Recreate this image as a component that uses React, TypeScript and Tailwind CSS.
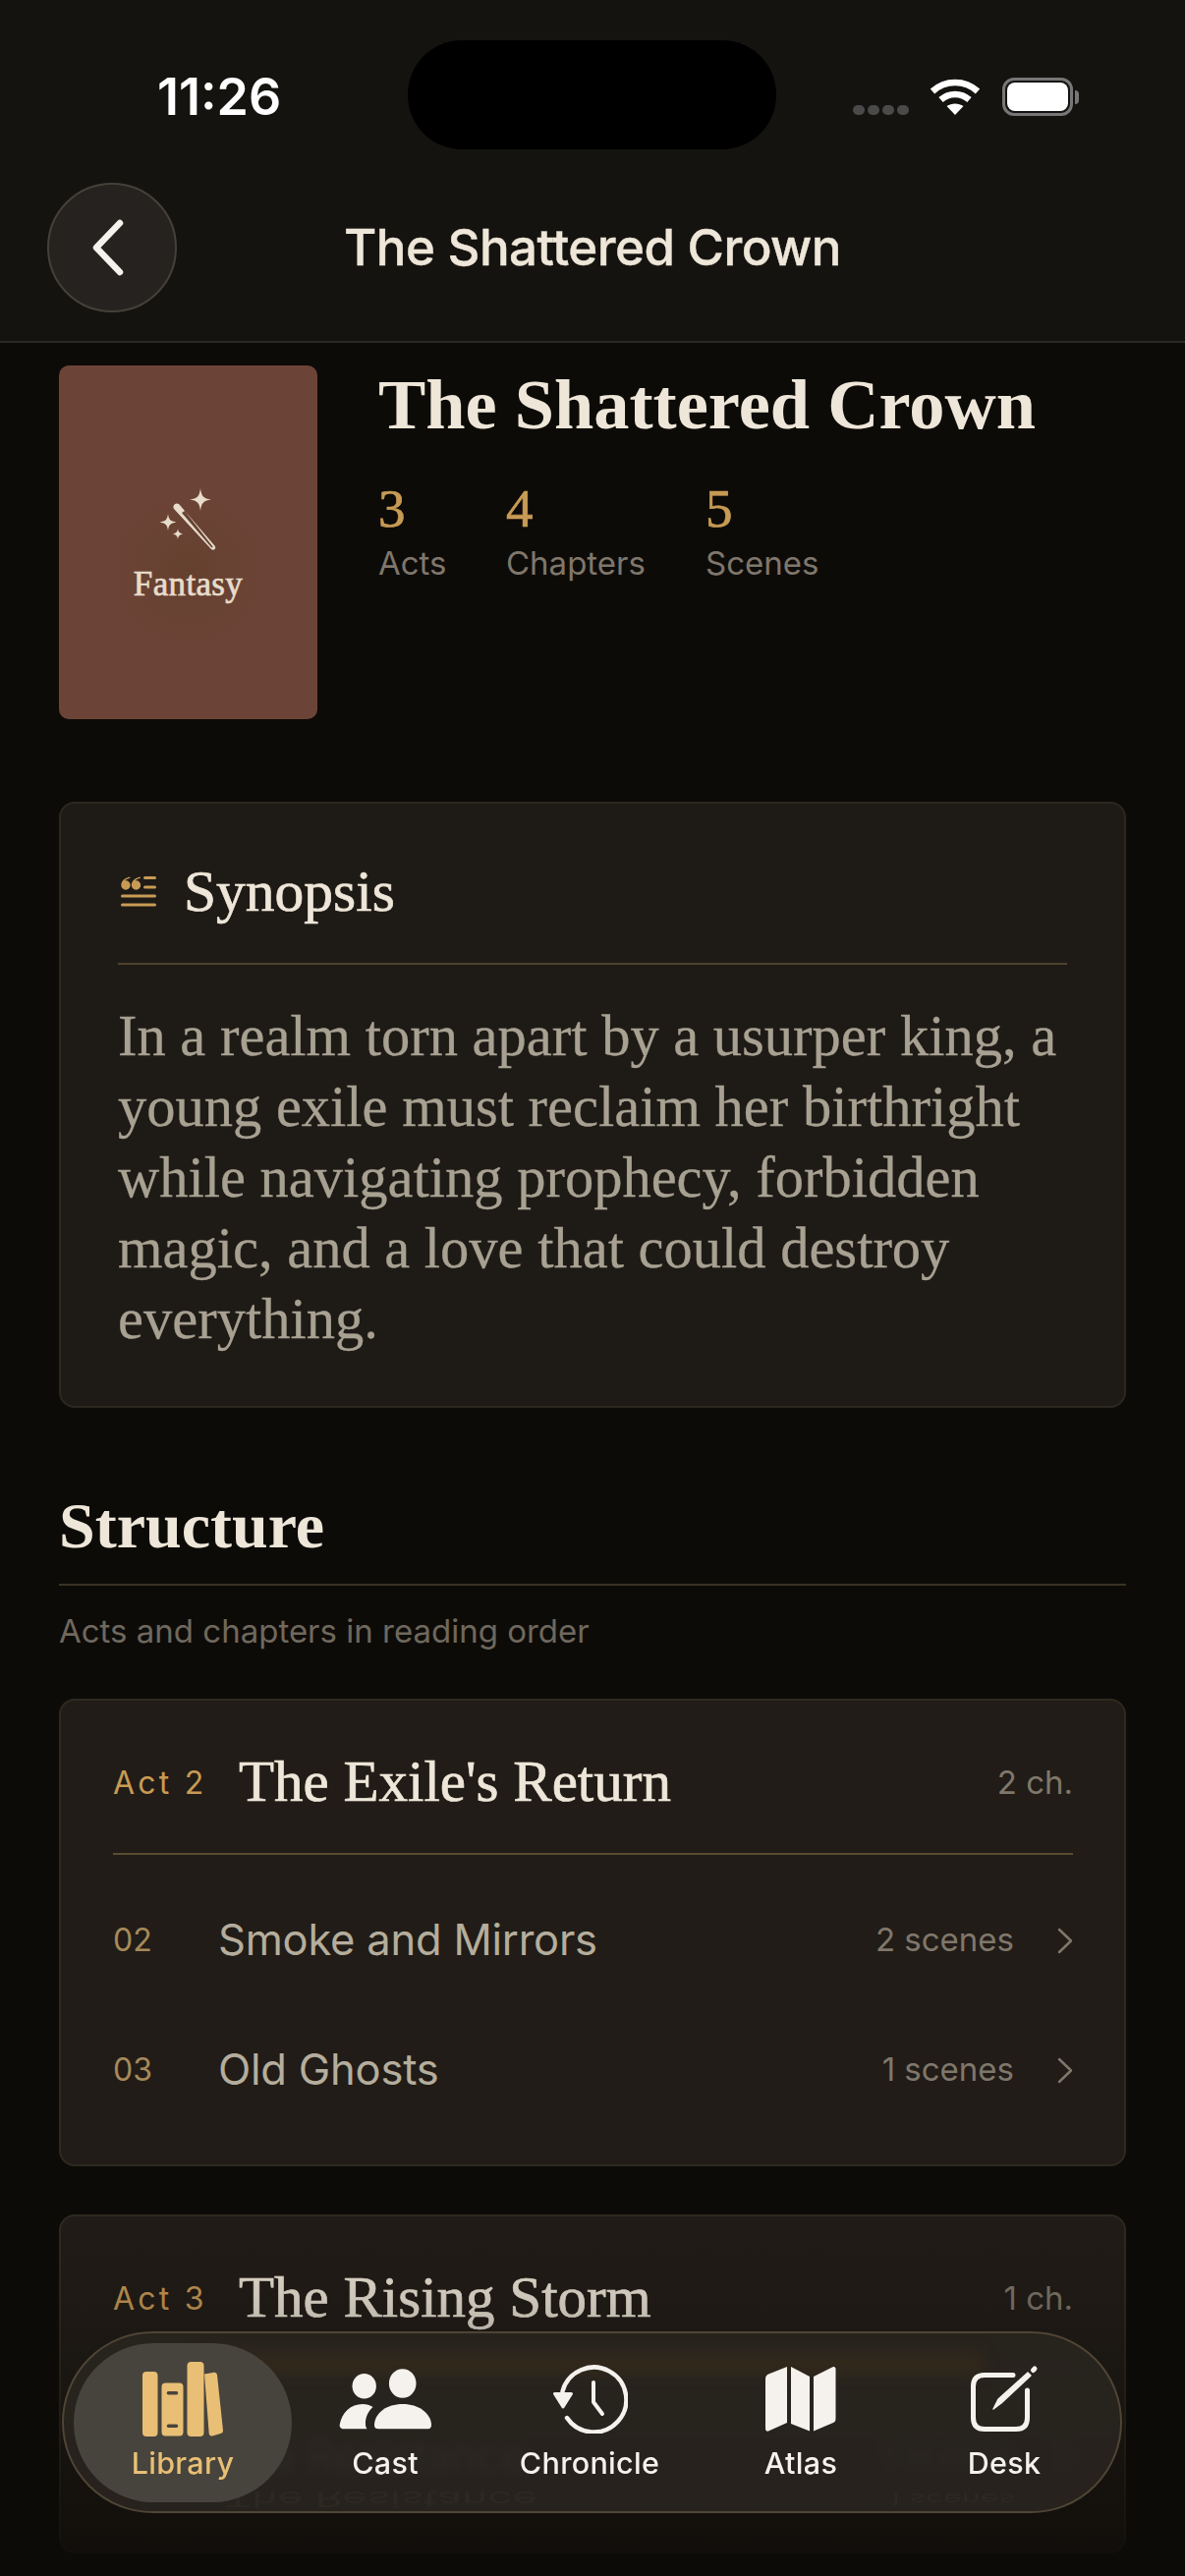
import type { ReactNode } from "react"

const serif = "font-['Liberation_Serif',serif]"
const medium = "[-webkit-text-stroke-width:0.7px]"

function LibraryIcon() {
    return (
        <svg width="82" height="76" viewBox="0 0 82 76" fill="#e8bf75">
            <rect x="0" y="10" width="15.5" height="66" rx="4" />
            <path fillRule="evenodd" d="M23.500 21.500h14a4 4 0 0 1 4 4v46a4 4 0 0 1-4 4h-14a4 4 0 0 1-4-4v-46a4 4 0 0 1 4-4ZM26.500 30a1.800 1.800 0 0 0 0 3.600h8a1.800 1.800 0 0 0 0-3.600ZM26.500 63.500a1.800 1.800 0 0 0 0 3.600h8a1.800 1.800 0 0 0 0-3.600Z" />
            <rect x="45.500" y="0" width="17" height="76" rx="4" />
            <path d="M63 12.500 73 10.800a2.800 2.800 0 0 1 3 2.500l6 56.500a3 3 0 0 1-2.500 3.200L71 75.500a3 3 0 0 1-3.300-2.700Z" />
        </svg>
    )
}

function CastIcon() {
    return (
        <svg width="94" height="62" viewBox="0 0 94 62" fill="#f5f2ed">
            <ellipse cx="25.700" cy="17.700" rx="12.200" ry="12.800" />
            <ellipse cx="64.700" cy="15" rx="13.800" ry="14.800" />
            <path d="M36 56.500C37 45 48 36 65 36 81 36 93 45 94 56.500 94.300 60 92.500 61.300 89.500 61.300H40C37.500 61.300 35.700 60 36 56.500Z" />
            <path d="M.8 56.500C3 44.500 12 36 24 36c4 0 7.500 1 10.500 3-4 3.500-7 9-7.500 15-.2 3 0 5.500 1.500 7.300H5C1.800 61.300.2 59.500.8 56.500Z" />
        </svg>
    )
}

function ChronicleIcon() {
    return (
        <svg width="77" height="70" viewBox="0 0 77 70" fill="none" stroke="#f5f2ed" strokeLinecap="round" strokeLinejoin="round">
            <path d="M15 54A33 33 0 1 0 10.500 27" strokeWidth="4.500" />
            <path d="M2.500 29.500H19.500L11 43Z" fill="#f5f2ed" strokeWidth="3" />
            <path d="M42 18V38L51 50" strokeWidth="4" />
        </svg>
    )
}

function AtlasIcon() {
    return (
        <svg width="72" height="67" viewBox="0 0 72 67" fill="#f5f2ed">
            <path d="M22 1V58L3 66.500C1.300 67 0 66 0 64V13.500C0 11.500.8 10 2.500 8.800Z" />
            <path d="M26 1 45 11V66.500L26 59Z" />
            <path d="M49 11 68.500 1.300C70.300.6 71.500 1.500 71.500 3.500V54C71.500 56 70.800 57 69 58L49 66.500Z" />
        </svg>
    )
}

function DeskIcon() {
    return (
        <svg width="71" height="70" viewBox="0 0 71 70" fill="none" stroke="#f5f2ed" strokeLinecap="round" strokeLinejoin="round">
            <path d="M44 10.500H15C7.500 10.500 3.500 14.500 3.500 22V54C3.500 61.500 7.500 65.500 15 65.500H47C54.500 65.500 58.500 61.500 58.500 54V26" strokeWidth="5" />
            <path d="M24 45 29 35 59 8 62 11 32 39Z" fill="#f5f2ed" strokeWidth="1.500" />
            <path d="M64.500 5.500 66 4" strokeWidth="5" />
        </svg>
    )
}

const tabs: { label: string; width: string; icon: ReactNode; active?: boolean }[] = [
    { label: "Library", width: "w-[222px]", icon: <LibraryIcon />, active: true },
    { label: "Cast", width: "w-[190px]", icon: <CastIcon /> },
    { label: "Chronicle", width: "w-[226px]", icon: <ChronicleIcon /> },
    { label: "Atlas", width: "w-[204px]", icon: <AtlasIcon /> },
    { label: "Desk", width: "w-[210px]", icon: <DeskIcon /> },
]

function StatusBar() {
    return (
        <div className="mt-[41px] flex h-[111px] pl-[160px] pr-[108px]">
            <div className="flex w-[255px] items-center pt-[4px] text-[52px] font-semibold leading-none text-white">
                11:26
            </div>
            <div className="h-full w-[375px] rounded-[55px] bg-black" />
            <div className="flex flex-1 items-center justify-end pt-[4px]">
                <div className="mr-[21px] mt-[26px] flex gap-[3px]">
                    <span className="h-[10px] w-[12px] rounded-full bg-[#4a4a4a]" />
                    <span className="h-[10px] w-[12px] rounded-full bg-[#4a4a4a]" />
                    <span className="h-[10px] w-[12px] rounded-full bg-[#4a4a4a]" />
                    <span className="h-[10px] w-[12px] rounded-full bg-[#4a4a4a]" />
                </div>
                <svg width="52" height="38" viewBox="0 0 52 38" fill="none" stroke="#fff" strokeWidth="6.500">
                    <path d="M3 13C16 1 36 1 49 13" />
                    <path d="M11.500 21.500C20 14 32 14 40.500 21.500" />
                    <path d="M26 37 17.500 28C22.500 24.500 29.500 24.500 34.500 28Z" fill="#fff" stroke="none" />
                </svg>
                <div className="ml-[22px] flex items-center">
                    <div className="flex h-[39px] w-[72px] rounded-[12px] border-[3px] border-[#777] p-[2px]">
                        <div className="flex-1 rounded-[8px] bg-white" />
                    </div>
                    <div className="ml-[2px] h-[14px] w-[4px] rounded-r-full bg-[#777]" />
                </div>
            </div>
        </div>
    )
}

function Header() {
    return (
        <header className="h-[349px] shrink-0 border-b-[2px] border-[#2b2926] bg-[#151310]">
            <StatusBar />
            <div className="mt-[34px] grid h-[132px] grid-cols-[132px_1fr_132px] items-center px-[48px]">
                <div className="flex size-[132px] items-center justify-center rounded-full border-[2px] border-[#45403a] bg-[#25221f]">
                    <svg width="34" height="58" viewBox="0 0 34 58" fill="none" stroke="#f5f2ed" strokeWidth="6.500" strokeLinecap="round" strokeLinejoin="round" className="-ml-[9px]">
                        <path d="M29 4 5 29 29 54" />
                    </svg>
                </div>
                <div className="text-center text-[51px] font-medium tracking-[-0.01em] text-[#eee6d8] [-webkit-text-stroke-width:0.4px]">The Shattered Crown</div>
            </div>
        </header>
    )
}

function Hero() {
    const stats = [
        { value: "3", label: "Acts", width: "w-[130px]" },
        { value: "4", label: "Chapters", width: "w-[203px]" },
        { value: "5", label: "Scenes", width: "w-[130px]" },
    ]
    return (
        <section className="flex gap-[62px]">
            <div className="relative flex h-[360px] w-[263px] shrink-0 flex-col items-center justify-center rounded-[10px] bg-[#6c4437] bg-[radial-gradient(circle_at_50%_58%,#64402e_0%,#6c4437_32%)] pt-[4px]">
                <svg width="62" height="72" viewBox="0 0 62 72" fill="#e8dccb" className="-ml-[4px]">
                    <path d="M45 4c1 8 3 10.500 11 11.500-8 1-10 3.500-11 11.500-1-8-3-10.500-11-11.500 8-1 10-3.500 11-11.500Z" />
                    <path d="M12 30c.8 6 2.500 7.500 8.500 8.500-6 1-7.700 2.500-8.500 8.500-.8-6-2.500-7.500-8.500-8.500 6-1 7.700-2.500 8.500-8.500Z" />
                    <path d="M22 45c.5 3.500 1.500 4.800 5.500 5.500-4 .7-5 2-5.500 5.500-.5-3.500-1.500-4.800-5.500-5.500 4-.7 5-2 5.500-5.500Z" />
                    <path d="M18.500 20.500c1.500-1.500 3.500-1.500 5 0L59.500 62.500c1 1.200 1 2.500 0 3.500s-2.500 1-3.500 0L18.500 25.500c-1.500-1.500-1.500-3.500 0-5Zm7.500 8.500 30 35c.5.500 1 .500 1.300.2.300-.3.300-.8 0-1.200L29 27Z" fillRule="evenodd" />
                </svg>
                <div className={`${serif} ${medium} mt-[10px] text-[35px] leading-[40px] tracking-[0.01em] text-[#e8dccb]`}>Fantasy</div>
            </div>
            <div>
                <h1 className={`${serif} h-[80px] text-[72.400px] font-bold leading-[80px] text-[#eee6d8]`}>The Shattered Crown</h1>
                <div className="mt-[38px] flex">
                    {stats.map((stat) => (
                        <div key={stat.label} className={stat.width}>
                            <div className={`${serif} ${medium} text-[55px] leading-[56px] text-[#c89b55]`}>{stat.value}</div>
                            <div className="mt-[5px] text-[33px] leading-[44px] text-[#7f776b]">{stat.label}</div>
                        </div>
                    ))}
                </div>
            </div>
        </section>
    )
}

function Synopsis() {
    return (
        <section className="mt-[84px] rounded-[16px] border-[2px] border-[#2c281f] bg-[#1e1b17] px-[58px] pb-[52px] pt-[60px]">
            <div className="flex h-[58px] items-center gap-[28px]">
                <svg width="36" height="31" viewBox="0 0 36 31" fill="#c89b55" className="ml-[3px]">
                    <path d="M9.300.5C4 1.500.3 4.800.3 9a4.700 4.700 0 1 0 4.700-4.700c-.3 0-.6 0-.9.1C5 3.300 7 2.300 9.300 2Z" />
                    <path d="M19.800.5C14.500 1.500 10.800 4.800 10.800 9a4.700 4.700 0 1 0 4.700-4.700c-.3 0-.6 0-.9.1C15.500 3.300 17.500 2.300 19.800 2Z" />
                    <rect x="23" y="0" width="13" height="3" rx="1.500" />
                    <rect x="23" y="9.500" width="13" height="3" rx="1.500" />
                    <rect x="0" y="18.500" width="36" height="3" rx="1.500" />
                    <rect x="0" y="27.500" width="36" height="3" rx="1.500" />
                </svg>
                <h2 className={`${serif} ${medium} text-[59.500px] leading-[58px] text-[#eee6d8]`}>Synopsis</h2>
            </div>
            <div className="mt-[44px] border-t-[2px] border-[#4f432c] pt-[37px]">
                <p className={`${serif} text-[58.500px] leading-[72px] text-[#a8a192] [-webkit-text-stroke-width:0.3px]`}>
                    In a realm torn apart by a usurper king, a young exile must reclaim her birthright while navigating prophecy, forbidden magic, and a love that could destroy everything.
                </p>
            </div>
        </section>
    )
}

function Chevron() {
    return (
        <svg width="16" height="27" viewBox="0 0 16 27" fill="none" stroke="#7f776b" strokeWidth="2.500" strokeLinecap="round" strokeLinejoin="round">
            <path d="M2 2 14 13.500 2 25" />
        </svg>
    )
}

function ActCard({ act, title, count, rows, className }: { act: string; title: string; count: string; rows: { num: string; title: string; scenes: string }[]; className: string }) {
    return (
        <section className={`rounded-[16px] border-[2px] border-[#2f2a20] bg-[#211c17] pl-[53px] pr-[52px] pt-[50px] ${className}`}>
            <div className="flex h-[68px] items-center">
                <span className="w-[128px] text-[32px] tracking-[0.1em] text-[#c89b55]">{act}</span>
                <span className={`${serif} ${medium} flex-1 pb-[4px] text-[59px] leading-[64px] text-[#eee6d8]`}>{title}</span>
                <span className="text-[33px] text-[#7f776b]">{count}</span>
            </div>
            <div className="mt-[37px] border-t-[2px] border-[#5a4c32] pt-[21px]">
                {rows.map((row) => (
                    <div key={row.num} className="flex h-[132px] items-center">
                        <span className="w-[107px] text-[32px] text-[#a68a5b]">{row.num}</span>
                        <span className="flex-1 text-[43.500px] tracking-[-0.005em] text-[#b5ad9c]">{row.title}</span>
                        <span className="mr-[44px] text-[33px] text-[#7f776b]">{row.scenes}</span>
                        <Chevron />
                    </div>
                ))}
            </div>
        </section>
    )
}

function Structure() {
    return (
        <section className="mt-[83px]">
            <h2 className={`${serif} border-b-[2px] border-[#3b3223] pb-[22px] text-[66px] font-bold leading-[74px] text-[#eee6d8]`}>Structure</h2>
            <p className="mt-[24px] text-[33px] leading-[44px] text-[#6f685d]">Acts and chapters in reading order</p>
            <ActCard
                className="mt-[47px] pb-[30px]"
                act="Act 2"
                title="The Exile's Return"
                count="2 ch."
                rows={[
                    { num: "02", title: "Smoke and Mirrors", scenes: "2 scenes" },
                    { num: "03", title: "Old Ghosts", scenes: "1 scenes" },
                ]}
            />
            <ActCard
                className="mt-[49px] h-[345px]"
                act="Act 3"
                title="The Rising Storm"
                count="1 ch."
                rows={[{ num: "04", title: "The Resistance", scenes: "1 scenes" }]}
            />
        </section>
    )
}

function TabBar() {
    return (
        <nav className="absolute bottom-[64px] left-[63px] flex h-[185px] w-[1079px] items-center overflow-hidden rounded-full border-[2px] border-[#4f4536] bg-[#29251f]/90 pl-[10px] backdrop-blur-[4px]">
            <div className="absolute left-[140px] right-[140px] top-[20px] h-[20px] bg-[#3f2f1a]/50 blur-[8px]" />
            <div className="absolute left-[163px] top-[160px] h-[17px] -scale-y-50 text-[44px] leading-[17px] text-[#2d2922]">The Resistance</div>
            <div className="absolute left-[838px] top-[160px] h-[17px] -scale-y-50 text-[32px] leading-[17px] text-[#2d2922]">1 scenes</div>
            {tabs.map((tab) => (
                <div
                    key={tab.label}
                    className={`relative flex h-[162px] shrink-0 flex-col items-center pt-[10px] ${tab.width} ${tab.active ? "rounded-full bg-[#47443d]" : ""}`}
                >
                    <div className="flex h-[94px] items-center justify-center">{tab.icon}</div>
                    <span className={`text-[30.500px] font-medium leading-[36px] tracking-[0.01em] ${tab.active ? "text-[#e8bf75]" : "text-[#f5f2ed]"}`}>{tab.label}</span>
                </div>
            ))}
        </nav>
    )
}

export default function App() {
    return (
        <div className="relative flex h-[2622px] w-[1206px] flex-col overflow-hidden bg-[#0d0b08] font-['Inter',sans-serif]">
            <Header />
            <main className="flex flex-col px-[60px] pt-[23px]">
                <Hero />
                <Synopsis />
                <Structure />
            </main>
            <div className="pointer-events-none absolute bottom-0 left-0 h-[372px] w-full bg-[linear-gradient(to_bottom,rgba(13,11,8,0)_0%,rgba(13,11,8,0.15)_24%,rgba(13,11,8,0.7)_86%,rgba(13,11,8,0.95)_100%)]" />
            <TabBar />
        </div>
    )
}
